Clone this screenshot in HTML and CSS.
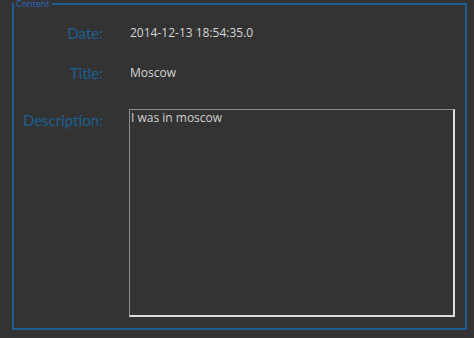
FILE: index.html
```html
<!DOCTYPE html>
<html>
<head>
<meta charset="utf-8">
<link rel="stylesheet" href="styles.css">
</head>
<body>
<fieldset class="panel">
  <legend class="panel-title">Content</legend>
  <div class="form">
    <div class="label">Date:</div>
    <div class="value">2014-12-13 18:54:35.0</div>
    <div class="label">Title:</div>
    <div class="value">Moscow</div>
    <div class="label label-desc">Description:</div>
    <textarea class="desc">I was in moscow</textarea>
  </div>
</fieldset>
</body>
</html>
```
FILE: styles.css
```css
html, body {
  margin: 0;
  padding: 0;
  background: #333333;
  width: 474px;
  height: 338px;
  overflow: hidden;
}
.panel {
  box-sizing: border-box;
  margin: 0 0 0 12px;
  padding: 0;
  width: 455px;
  height: 330px;
  border: 2px solid #1f5b90;
  min-width: 0;
}
.panel-title {
  margin-left: 0;
  padding: 0 2px;
  font-family: "Open Sans", sans-serif;
  font-size: 9px;
  line-height: 8px;
  color: #2b6cc4;
}
.form {
  display: grid;
  grid-template-columns: 89px 326px;
  column-gap: 26px;
  grid-template-rows: 20px 20px 208px;
  row-gap: 20px;
  padding-top: 15px;
}
.label {
  font-family: "Lato", sans-serif;
  font-size: 15px;
  line-height: 20px;
  color: #1b6092;
  text-align: right;
}
.value {
  font-family: "Open Sans", sans-serif;
  font-size: 12px;
  line-height: 20px;
  color: #d6d6d6;
  padding-left: 1px;
}
.label-desc {
  margin-top: 7px;
}
.desc {
  box-sizing: border-box;
  margin: 6px 0 0 0;
  width: 326px;
  height: 208px;
  padding: 0 1px;
  resize: none;
  background: #333333;
  color: #d0d0d0;
  font-family: "Open Sans", sans-serif;
  font-size: 12px;
  line-height: 16px;
  border-style: solid;
  border-width: 1px 2px 2px 1px;
  border-color: #8c8c8c #dcdcdc #dcdcdc #8c8c8c;
  outline: none;
}
```
